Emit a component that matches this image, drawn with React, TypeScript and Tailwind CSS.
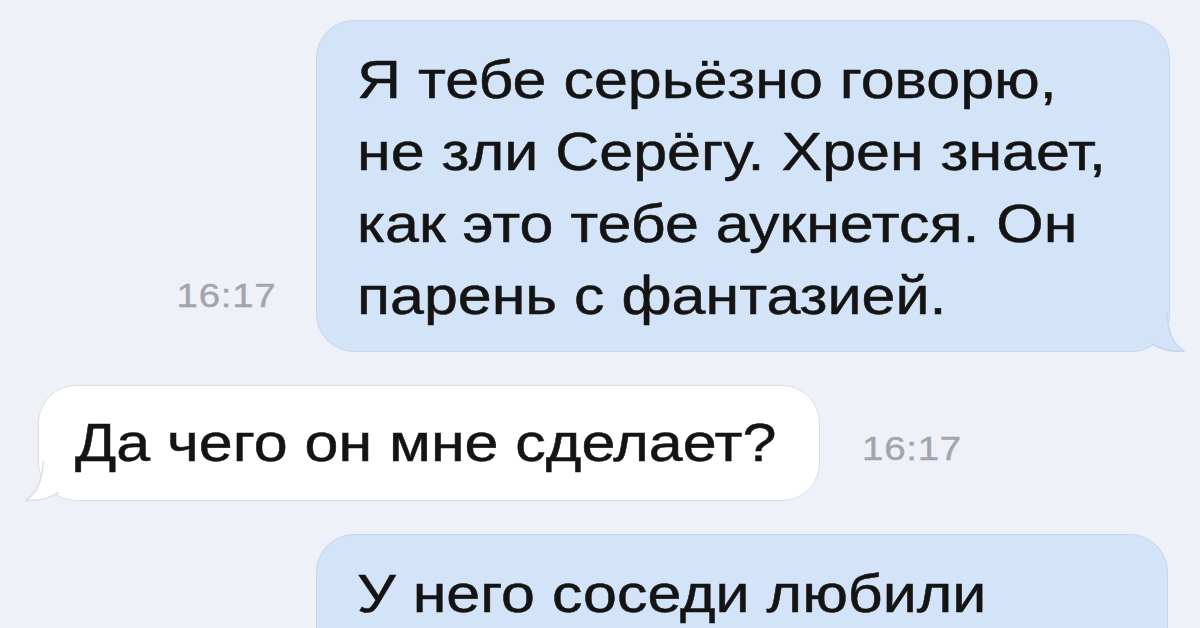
import React from 'react'

const font = { fontFamily: '"Liberation Sans", Arial, sans-serif' }

function Time({ className = '' }: { className?: string }) {
  return (
    <span className={`inline-block text-[34px] leading-none tracking-[0.02em] text-[#a2a5ac] scale-x-[1.13] [-webkit-text-stroke:0.4px_#a2a5ac] ${className}`}>
      16:17
    </span>
  )
}

function Line({ text }: { text: string }) {
  return (
    <div className="text-[53px] leading-[72px] whitespace-nowrap">
      <span className="inline-block origin-left scale-x-[1.15] [-webkit-text-stroke:0.5px_#141414]">{text}</span>
    </div>
  )
}

function OutTail() {
  return (
    <svg className="absolute right-[-16px] bottom-[-1px]" width="34" height="40" viewBox="0 0 34 40">
      <path d="M0 0 L16 0 C16 18 22 32 33 39 C22 40 10 38 0 31 Z" fill="#d4e4f8" />
      <path d="M16 0 C16 18 22 32 33 39 C22 40 10 38 0 31" fill="none" stroke="#c6d6ec" strokeWidth="1.5" />
    </svg>
  )
}

function InTail() {
  return (
    <svg className="absolute left-[-14px] bottom-[-1px]" width="34" height="40" viewBox="0 0 34 40">
      <path d="M34 0 L18 0 C18 18 12 32 1 39 C12 40 24 38 34 31 Z" fill="#ffffff" />
      <path d="M18 0 C18 18 12 32 1 39 C12 40 24 38 34 31" fill="none" stroke="#dcdfe6" strokeWidth="1.5" />
    </svg>
  )
}

export default function App() {
  const lines1 = [
    'Я тебе серьёзно говорю,',
    'не зли Серёгу. Хрен знает,',
    'как это тебе аукнется. Он',
    'парень с фантазией.',
  ]

  return (
    <div className="w-[1200px] h-[628px] overflow-hidden bg-[#eef1f8] text-[#141414]" style={font}>
      <div className="flex flex-col gap-[33px] pt-[20px]">
        <div className="flex items-end">
          <div className="w-[316px] flex justify-end pr-[40px] pb-[40px]">
            <Time className="origin-right" />
          </div>
          <div className="relative w-[854px] rounded-[38px] bg-[#d4e4f8] border border-[#c6d6ec] pl-[40px] pt-[23px] pb-[19px]">
            {lines1.map(l => (
              <Line key={l} text={l} />
            ))}
            <OutTail />
          </div>
        </div>

        <div className="flex items-center pl-[38px]">
          <div className="relative w-[782px] rounded-[38px] bg-white border border-[#dcdfe6] pl-[36px] pt-[21px] pb-[21px]">
            <Line text="Да чего он мне сделает?" />
            <InTail />
          </div>
          <Time className="origin-left ml-[42px] mt-[10px]" />
        </div>

        <div className="flex pl-[316px]">
          <div className="w-[852px] rounded-t-[38px] bg-[#d4e4f8] border border-[#c6d6ec] pl-[40px] pt-[23px] pb-[40px]">
            <Line text="У него соседи любили" />
          </div>
        </div>
      </div>
    </div>
  )
}
